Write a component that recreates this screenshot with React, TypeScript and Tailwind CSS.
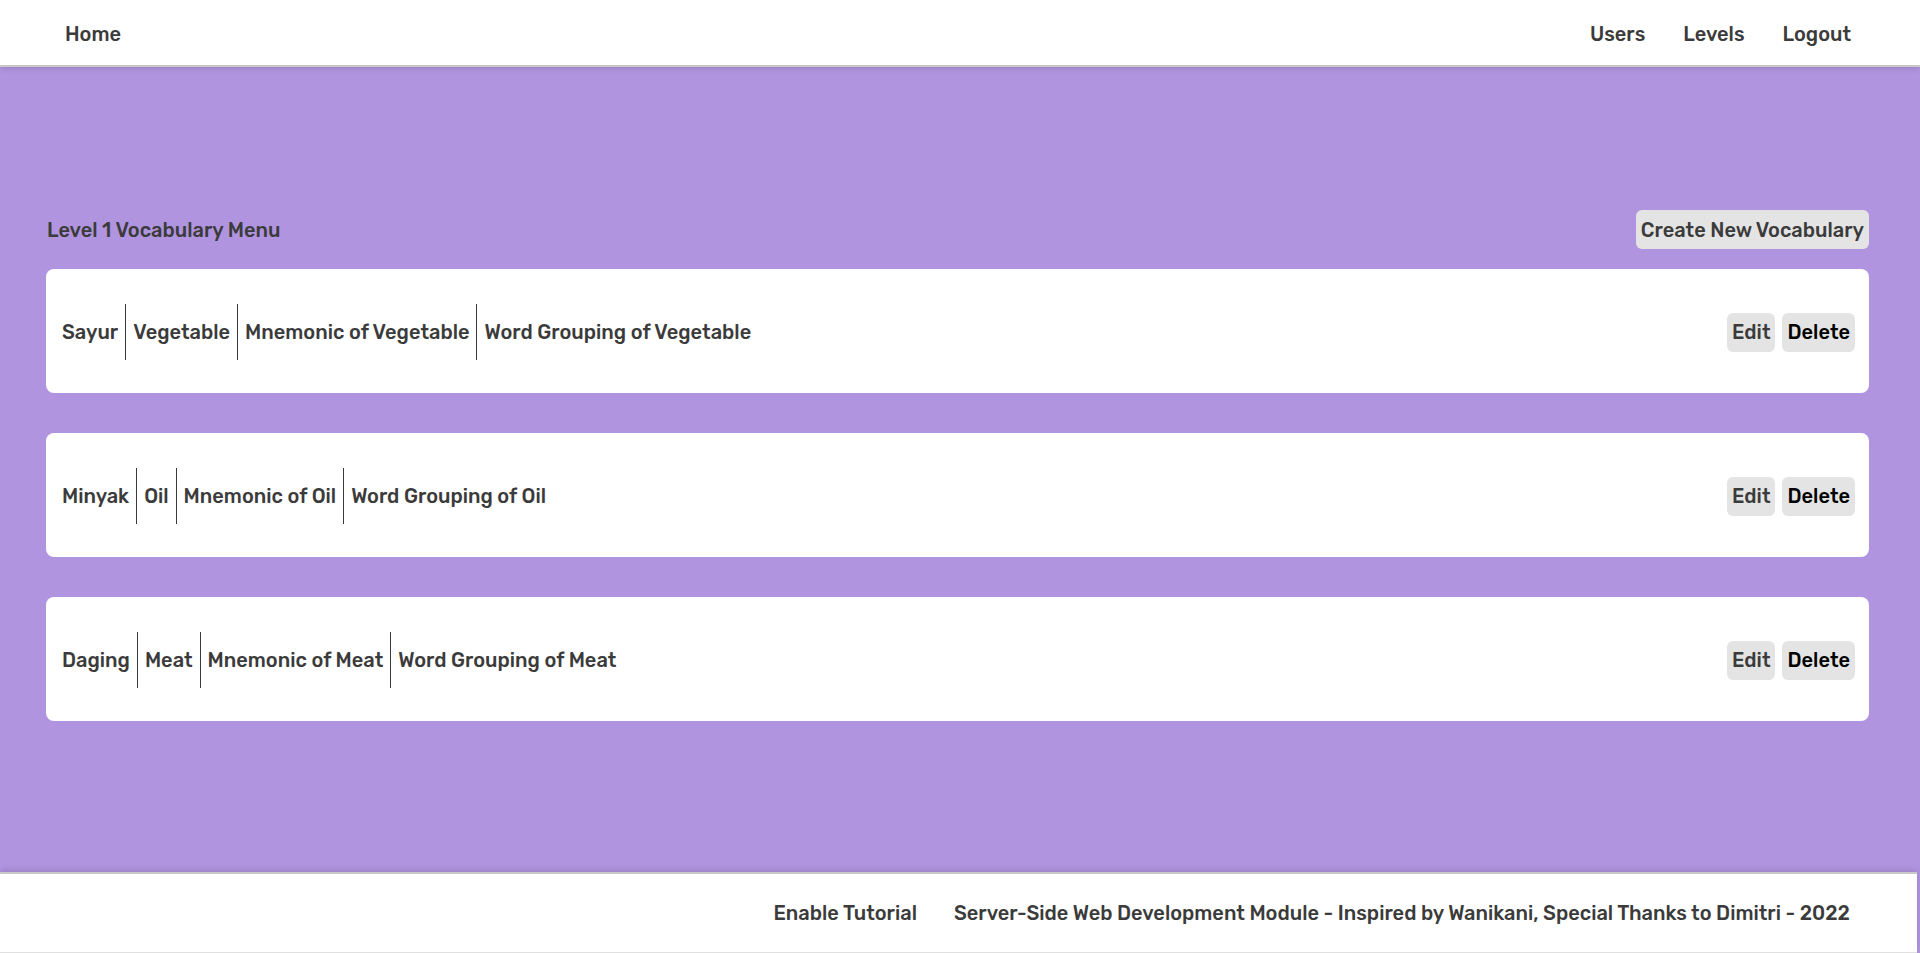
import React from 'react';

const vocabularies = [
  { word: 'Sayur', meaning: 'Vegetable' },
  { word: 'Minyak', meaning: 'Oil' },
  { word: 'Daging', meaning: 'Meat' },
];

const VocabularyCard = ({ word, meaning }: { word: string; meaning: string }) => {
  const parts = [word, meaning, `Mnemonic of ${meaning}`, `Word Grouping of ${meaning}`];

  return (
    <div className="flex items-center justify-between h-[124px] mb-[40px] px-[15px] bg-white rounded-lg">
      <div className="flex items-center pt-[2px]">
        {parts.map((part, index) => (
          <span
            key={index}
            className={`flex items-center h-[56px] px-[7px] first:pl-[1px] ${
              index < parts.length - 1 ? 'border-r border-[#3b3b3b]' : ''
            }`}
          >
            {part}
          </span>
        ))}
      </div>
      <div className="flex items-center gap-[7px] mr-[-1px] pt-[2px]">
        <button className="h-[39px] px-[5px] rounded-md bg-[#e4e4e4] text-[#3b3b3b]">Edit</button>
        <button className="h-[39px] px-[5px] rounded-md bg-[#e4e4e4] text-black">Delete</button>
      </div>
    </div>
  );
};

const App = () => {
  return (
    <div className="min-h-screen flex flex-col bg-[#b194e0] font-['Rubik','Inter','Noto_Sans',sans-serif] font-medium text-[20px] text-[#3b3b3b]">
      {/* Top navigation */}
      <header className="relative z-10 flex items-center justify-between h-[67px] pt-[2px] pl-[65px] pr-[69px] bg-white border-b-2 border-[#c8c8c8] shadow-[0_2px_6px_rgba(0,0,0,0.12)]">
        <a className="cursor-pointer">Home</a>
        <nav className="flex items-center gap-[38px]">
          <a className="cursor-pointer">Users</a>
          <a className="cursor-pointer">Levels</a>
          <a className="cursor-pointer">Logout</a>
        </nav>
      </header>

      {/* Vocabulary list */}
      <main className="flex-1 pt-[143px] pl-[46px] pr-[51px]">
        <div className="flex items-center justify-between h-[39px] mb-[20px]">
          <h1 className="pl-[1px] pt-[1px]">Level 1 Vocabulary Menu</h1>
          <button className="h-[39px] px-[5px] rounded-md bg-[#e4e4e4] text-[#3b3b3b]">Create New Vocabulary</button>
        </div>
        {vocabularies.map((vocab) => (
          <VocabularyCard key={vocab.word} word={vocab.word} meaning={vocab.meaning} />
        ))}
      </main>

      {/* Footer */}
      <footer className="relative flex items-center justify-end gap-[37px] h-[81px] mr-[3px] pr-[67px] bg-white border-t-2 border-b border-t-[#c8c8c8] border-b-[#e0e0e0] shadow-[0_-2px_6px_rgba(0,0,0,0.12)]">
        <a className="cursor-pointer">Enable Tutorial</a>
        <span>Server-Side Web Development Module - Inspired by Wanikani, Special Thanks to Dimitri - 2022</span>
      </footer>
    </div>
  );
};

export default App;
